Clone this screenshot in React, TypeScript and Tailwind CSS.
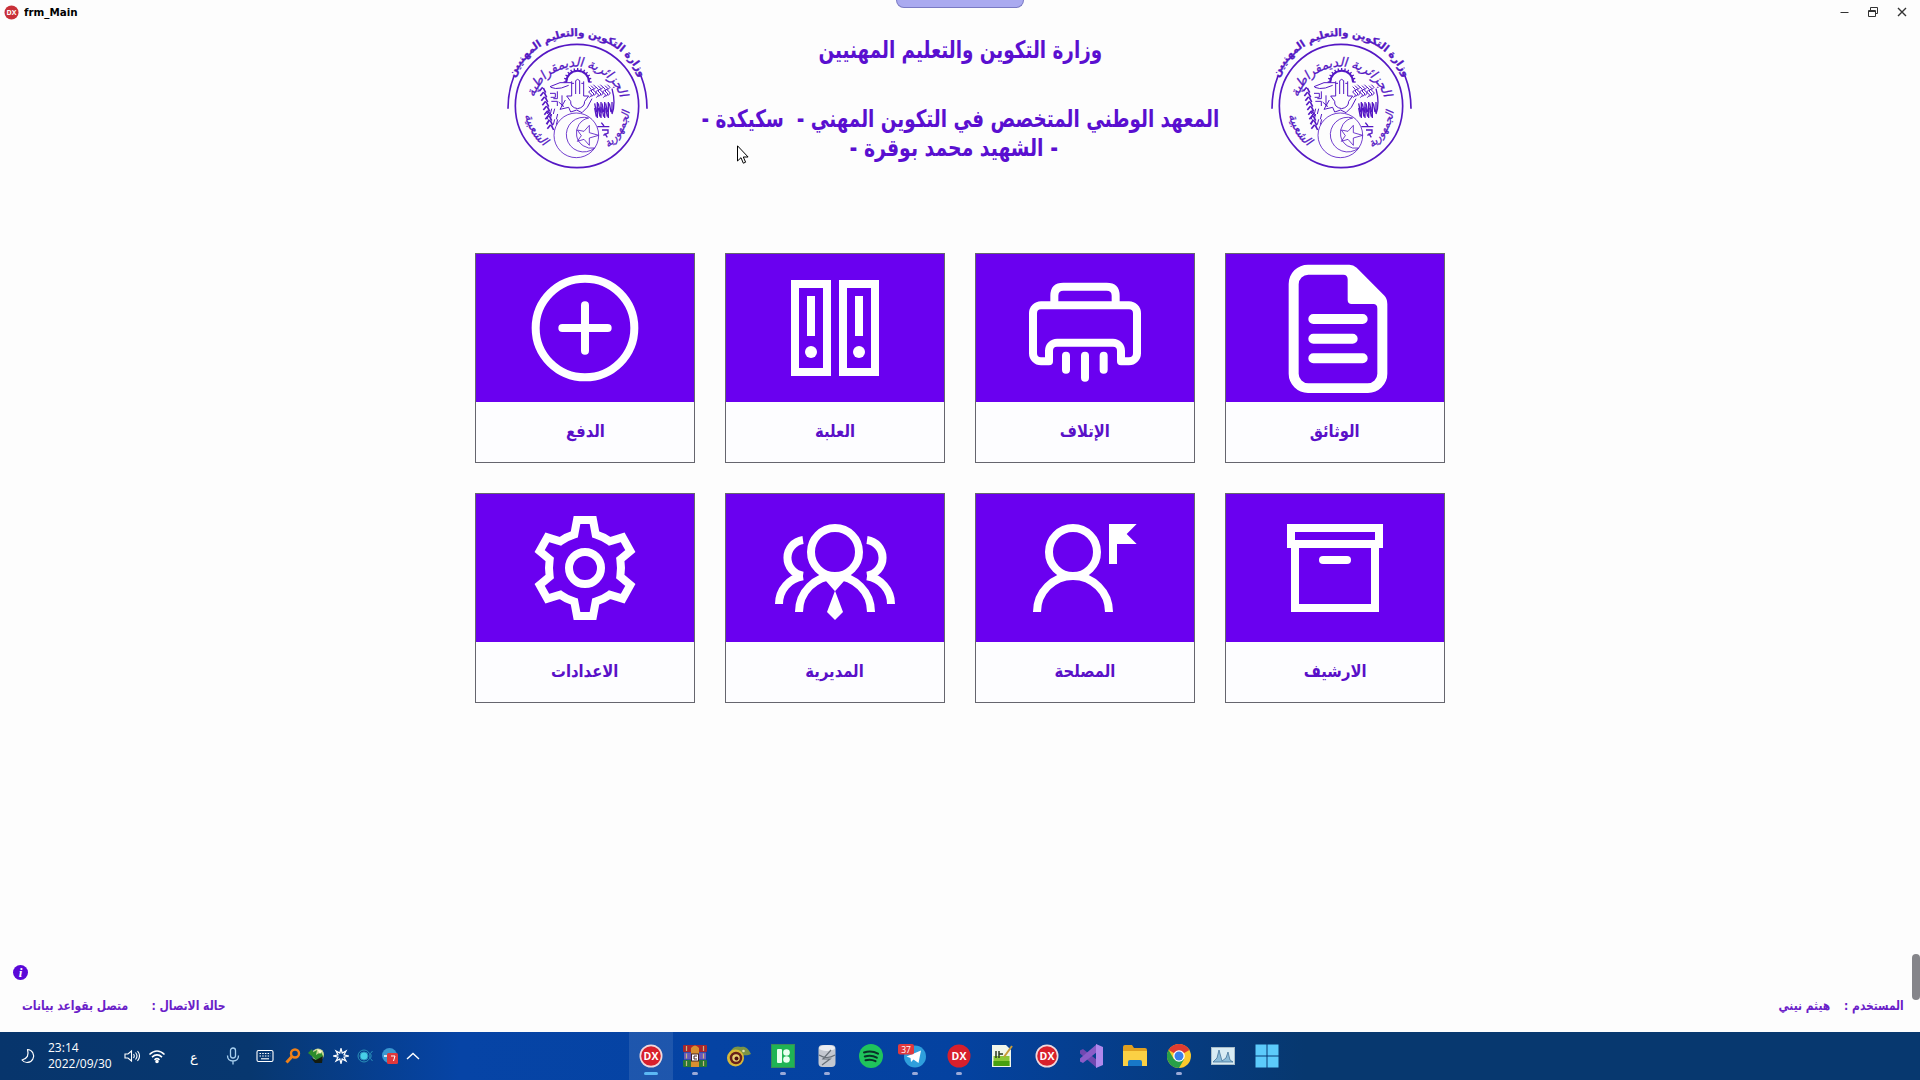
import React from "react";

const AR = "font-['DejaVu_Sans',sans-serif]";

function Seal() {
  const rays = Array.from({ length: 13 }, (_, i) => Math.PI + (i * Math.PI) / 12);
  const leaves = Array.from({ length: 9 }, (_, i) => i);
  return (
    <svg viewBox="0 0 480 480" className="size-40 shrink-0 overflow-visible" fill="none" stroke="#5518c4" strokeWidth="4">
      <defs>
        <path id="outerArc" d="M38 184 A205 205 0 0 1 424 184" />
        <path id="innerArc" d="M96 300 A137 137 0 1 1 366 300" />
        <path id="lowerLeft" d="M72 262 A162 162 0 0 0 150 392" />
        <path id="lowerRight" d="M314 390 A162 162 0 0 0 390 262" />
      </defs>
      <circle cx="231" cy="258" r="185" strokeWidth="5" />
      <path d="M24 266 Q24 214 42 168 M441 266 Q441 214 423 168" strokeWidth="5" />
      <g fill="#5518c4" stroke="none" className="font-['DejaVu_Sans',sans-serif]" direction="rtl">
        <text fontSize="31" fontWeight="700" textAnchor="middle" stroke="#5518c4" strokeWidth="1">
          <textPath href="#outerArc" startOffset="50%">وزارة التكوين والتعليم المهنيين</textPath>
        </text>
        <text fontSize="38" fontStyle="italic" textAnchor="middle" stroke="#5518c4" strokeWidth="0.8">
          <textPath href="#innerArc" startOffset="50%">الجزائرية الديمقراطية</textPath>
        </text>
        <text fontSize="36" fontStyle="italic" textAnchor="middle" stroke="#5518c4" strokeWidth="0.8">
          <textPath href="#lowerLeft" startOffset="50%">الشعبية</textPath>
        </text>
        <text fontSize="32" fontStyle="italic" textAnchor="middle" stroke="#5518c4" strokeWidth="0.8">
          <textPath href="#lowerRight" startOffset="50%">الجمهورية</textPath>
        </text>
      </g>
      <path d="M199 186 A34 34 0 0 1 267 186" strokeWidth="6" />
      {rays.map((a) => (
        <path
          key={a}
          d={`M${233 + 32 * Math.cos(a)} ${186 + 32 * Math.sin(a)} L${233 + 42 * Math.cos(a)} ${186 + 42 * Math.sin(a)}`}
          strokeWidth="4"
        />
      ))}
      <path d="M215 228 V184 M227 222 V182 Q233 174 239 182 V222 M251 184 V228 M215 190 H222 M244 190 H251 M215 228 H200 L212 244 Q210 262 233 266 Q254 262 254 244 L266 228 H251" strokeWidth="3" />
      <path d="M150 200 L180 188 H214 M152 202 Q166 208 184 204 L206 196 M196 240 L180 268 L206 262 L212 276 L230 270 L246 278 L262 262 L276 236" strokeWidth="3" />
      <path d="M150 220 h16 v12 h-14 M172 214 v22 h-12 M154 244 h18 v14 M186 226 v34 M176 246 l16 14" strokeWidth="3" />
      {leaves.map((i) => (
        <g key={i} strokeWidth="5">
          <path d={`M${128 + i * 3} ${202 + i * 14} l-10 12 M${130 + i * 3} ${204 + i * 14} l7 14`} />
          <path d={`M${146 + (i % 4) * 9} ${266 + Math.floor(i / 3) * 16} l-4 16`} strokeWidth="3" />
          <path d={`M${284 + (i % 5) * 11} ${250 + (i % 2) * 14} l5 26 m3 -30 v34`} strokeWidth="4" />
          <path d={`M${266 + i * 7} ${200 - (i % 3) * 3} l8 8 l-8 8 l9 9 l-7 8`} strokeWidth="3" />
        </g>
      ))}
      <path d="M336 206 Q348 250 336 282 M292 320 H328 M304 308 L312 318 M306 330 h18 v10 M310 346 l16 -8 M314 340 l8 12" strokeWidth="4" />
      <circle cx="229" cy="346" r="67" strokeWidth="2.5" />
      <path d="M284 384 A52 52 0 1 1 266 294 A45 45 0 1 0 284 384" strokeWidth="2.5" />
      <path d="M232 330 L252 334 L268 316 L268 338 L296 346 L268 354 L268 376 L252 358 L232 364 L244 347 Z" strokeWidth="2.5" />
    </svg>
  );
}

const tiles: { label: string; icon: React.ReactNode }[] = [
  {
    label: "الدفع",
    icon: (
      <g strokeLinecap="round">
        <circle cx="375" cy="264" r="148" />
        <path d="M307 264 H443 M375 196 V332" />
      </g>
    ),
  },
  {
    label: "العلبة",
    icon: (
      <>
        <rect x="255" y="132" width="96" height="264" />
        <rect x="399" y="132" width="96" height="264" />
        <path d="M303 168 V288 M447 168 V288" />
        <g fill="white" stroke="none">
          <circle cx="303" cy="336" r="18" />
          <circle cx="447" cy="336" r="18" />
        </g>
      </>
    ),
  },
  {
    label: "الإتلاف",
    icon: (
      <>
        <path d="M283 190 V167 Q283 140 310 140 H440 Q467 140 467 167 V190" />
        <path d="M267 364 H243 a24 24 0 0 1 -24 -24 V220 a24 24 0 0 1 24 -24 H507 a24 24 0 0 1 24 24 V340 a24 24 0 0 1 -24 24 H483 V332 a24 24 0 0 0 -24 -24 H291 a24 24 0 0 0 -24 24 Z" strokeLinejoin="round" />
        <path d="M318 347 V389 M375 347 V413 M431 347 V389" strokeLinecap="round" />
      </>
    ),
  },
  {
    label: "الوثائق",
    icon: (
      <>
        <path
          fill="white"
          stroke="none"
          fillRule="evenodd"
          d="M294 74 H418 Q430 74 440 83 L522 166 Q532 176 532 192 V401 a58 58 0 0 1 -58 58 H294 a58 58 0 0 1 -58 -58 V132 a58 58 0 0 1 58 -58 Z M295 104 H400 Q413 104 413 118 V180 Q413 192 425 192 H490 Q502 192 502 206 V401 a29 29 0 0 1 -29 29 H295 a29 29 0 0 1 -29 -29 V133 a29 29 0 0 1 29 -29 Z"
        />
        <path d="M310 237 H458 M310 296 H428 M310 355 H458" strokeWidth="30" strokeLinecap="round" />
      </>
    ),
  },
  {
    label: "الاعدادات",
    icon: (
      <>
        <path d="M351 120 L399 120 L407 163 Q430 170 449 184 L488 172 L511 213 L481 238 Q485 264 481 290 L511 315 L488 356 L449 344 Q430 358 407 365 L399 408 H351 L343 365 Q320 358 301 344 L262 356 L239 315 L269 290 Q265 264 269 238 L239 213 L262 172 L301 184 Q320 170 343 163 Z" />
        <circle cx="375" cy="264" r="48" />
      </>
    ),
  },
  {
    label: "المديرية",
    icon: (
      <>
        <circle cx="375" cy="216" r="72" />
        <path d="M267 396 A108 108 0 0 1 483 396" />
        <path d="M279 180 A54 54 0 0 0 279 287 M471 180 A54 54 0 0 1 471 287" />
        <path d="M279 289 A84 84 0 0 0 207 372 M471 289 A84 84 0 0 1 543 372" />
        <path d="M340 294 L375 334 L410 294 Z M375 332 L399 396 L375 420 L351 396 Z" fill="white" stroke="none" />
      </>
    ),
  },
  {
    label: "المصلحة",
    icon: (
      <>
        <circle cx="339" cy="216" r="72" />
        <path d="M231 396 A108 108 0 0 1 447 396" />
        <path d="M447 132 H530 L500 162 L530 192 H471 V252 H447 Z" fill="white" stroke="none" />
      </>
    ),
  },
  {
    label: "الارشيف",
    icon: (
      <>
        <rect x="243" y="144" width="264" height="48" />
        <path d="M255 192 V384 H495 V192" />
        <path d="M339 240 H411" strokeLinecap="round" />
      </>
    ),
  },
];

function Tile({ label, icon }: { label: string; icon: React.ReactNode }) {
  return (
    <div className="flex h-[210px] w-[220px] flex-col border border-[#66666e] bg-[#fdfdff]">
      <div className="h-[148px] bg-[#6a00f0]">
        <svg viewBox="48 42 654 444" className="h-[148px] w-[218px]" fill="none" stroke="white" strokeWidth="24">
          {icon}
        </svg>
      </div>
      <div className={`flex flex-1 items-center justify-center pb-0.5 text-[17px] leading-none font-bold text-[#5a10c8] ${AR}`}>
        <span className="scale-x-[0.87]">{label}</span>
      </div>
    </div>
  );
}

function DxIcon({ ring }: { ring?: boolean }) {
  return (
    <svg viewBox="0 0 24 24" className="size-6">
      <circle cx="12" cy="12" r="11.5" fill={ring ? "#f0d8dc" : "#d8202c"} />
      <circle cx="12" cy="12" r="9.8" fill="#d8202c" />
      <text x="12" y="15.8" textAnchor="middle" fontSize="10.5" fontWeight="700" fill="white" fontFamily="Open Sans, sans-serif">
        DX
      </text>
    </svg>
  );
}

const apps: { icon: React.ReactNode; run?: boolean; active?: boolean }[] = [
  { icon: <DxIcon ring />, active: true },
  {
    run: true,
    icon: (
      <svg viewBox="0 0 24 24" className="size-6">
        <rect y="1" width="24" height="7" rx="1" fill="#a8262c" />
        <rect x="1" y="8.500" width="22" height="7" fill="#6a5ab8" />
        <rect y="16" width="24" height="7" rx="1" fill="#2a7a34" />
        <path d="M3.500 2v20M20.500 2v20" stroke="#c8b880" strokeWidth="1.200" strokeDasharray="5 2.500" />
        <path d="M8 4q4-5 8 0v19H8Z" fill="#d89030" />
        <rect x="8.500" y="10" width="7" height="7" fill="#fff" stroke="#422" />
        <path d="M14 12h-3v3h3" stroke="#422" fill="none" />
      </svg>
    ),
  },
  {
    icon: (
      <svg viewBox="0 0 24 24" className="size-6">
        <path d="M2 12C3 4 9 1 14 3c4-1 7 1 10 7-3 2-8 1-10 1Z" fill="#7c9444" />
        <circle cx="8.500" cy="14" r="8.500" fill="#d8b838" />
        <circle cx="9" cy="14" r="5" fill="#e8d070" stroke="#68201a" strokeWidth="2.500" />
        <circle cx="9.500" cy="14.500" r="2" fill="#501010" />
        <circle cx="16.500" cy="7" r="1.300" fill="#e0e0b0" />
      </svg>
    ),
  },
  {
    run: true,
    icon: (
      <svg viewBox="0 0 24 24" className="size-6">
        <rect width="24" height="24" fill="#3a8a58" />
        <rect x="1" y="1" width="22" height="22" fill="#1fb454" />
        <rect x="6" y="5" width="5" height="14" rx="1" fill="#eafff0" />
        <circle cx="15.500" cy="8.500" r="3.300" fill="#eafff0" />
        <circle cx="15.500" cy="15.500" r="3.300" fill="#eafff0" />
      </svg>
    ),
  },
  {
    run: true,
    icon: (
      <svg viewBox="0 0 24 24" className="size-6">
        <rect x="3.500" y="1" width="17" height="22" rx="4" fill="#c4c8d0" />
        <ellipse cx="12" cy="4" rx="8" ry="3" fill="#eceef2" />
        <path d="M4 11q8 5 16 0M16 6 L8 15 h7 L7 21" stroke="#687078" fill="none" strokeWidth="1.200" />
      </svg>
    ),
  },
  {
    icon: (
      <svg viewBox="0 0 24 24" className="size-6">
        <circle cx="12" cy="12" r="12" fill="#1fc45c" />
        <path d="M5 8.500q7.500-2.500 14 1.200M5.800 12.500q6.500-2 12 1.200M6.500 16.200q5.500-1.500 10 1" stroke="#0a3028" strokeWidth="2" fill="none" strokeLinecap="round" />
      </svg>
    ),
  },
  {
    run: true,
    icon: (
      <svg viewBox="0 0 28 24" className="h-6 w-7 -translate-x-[3px]">
        <circle cx="17" cy="12.500" r="11" fill="#2f9fdc" />
        <path d="M8.500 12.500 L23 6.500 L20.500 19 L15.500 15.500 L13 18 L12.500 14 Z" fill="white" />
        <rect width="16" height="10.500" rx="2" fill="#e03a3e" />
        <text x="8" y="8.700" fontSize="8.500" fill="white" textAnchor="middle" fontFamily="Open Sans, sans-serif">37</text>
      </svg>
    ),
  },
  { icon: <DxIcon />, run: true },
  {
    icon: (
      <svg viewBox="0 0 24 24" className="size-6 -translate-x-px">
        <path d="M2 1h14l5 5v17H2Z" fill="#f2f6ea" />
        <path d="M3.500 12h16v10h-16Z" fill="#8cc838" />
        <path d="M3.500 17h16v5h-16Z" fill="#48a010" />
        <path d="M6 7v7M9 7v7M9 10h4" stroke="#2a3a20" strokeWidth="1.500" />
        <path d="M22 2 L14 13" stroke="#c89c38" strokeWidth="2" />
      </svg>
    ),
  },
  { icon: <DxIcon ring /> },
  {
    icon: (
      <svg viewBox="0 0 24 24" className="size-6">
        <path d="M1 6.500 L4 5 L18 16 V24 L1 9.500 Z" fill="#7048b0" />
        <path d="M1 17.500 L4 19 L18 8 V0 L1 14.500 Z" fill="#8a5cc8" />
        <path d="M17 0 L24 3 V21 L17 24 Z" fill="#b088ec" />
      </svg>
    ),
  },
  {
    icon: (
      <svg viewBox="0 0 24 24" className="size-6">
        <path d="M0 3q0-2 2-2h7l2 3h11q2 0 2 2v4H0Z" fill="#e0a020" />
        <path d="M0 7h24v15H0Z" fill="#fbd044" />
        <path d="M5 22v-4q0-2 2-2h10q2 0 2 2v4Z" fill="#1878c8" />
      </svg>
    ),
  },
  {
    run: true,
    icon: (
      <svg viewBox="0 0 24 24" className="size-6">
        <circle cx="12" cy="12" r="12" fill="#fbc92c" />
        <path d="M12 12 L1.600 6 A12 12 0 0 1 22.400 6 Z" fill="#e03c30" />
        <path d="M1.600 6 A12 12 0 0 0 12 24 L17.200 15 H6.800 Z" fill="#28a048" />
        <circle cx="12" cy="12" r="5.800" fill="white" />
        <circle cx="12" cy="12" r="4.500" fill="#3a80ea" />
      </svg>
    ),
  },
  {
    icon: (
      <svg viewBox="0 0 24 24" className="size-6">
        <rect y="3" width="24" height="18" fill="#a8bcc8" />
        <rect x="1" y="4" width="22" height="16" fill="#d8ecf4" />
        <path d="M2 18 L6 14 L8 6 L11 17 L15 14 L17 8 L19 16 L22 18Z" fill="#8cbcd8" stroke="#386890" strokeWidth=".7" />
      </svg>
    ),
  },
  {
    icon: (
      <svg viewBox="0 0 24 24" className="size-6" fill="#5ccbfb">
        <path d="M.5.500h11v11H.5zM12.500.500h11v11h-11zM.5 12.500h11v11H.5zM12.500 12.500h11v11h-11z" />
      </svg>
    ),
  },
];

function Slot({ w = "w-6", children }: { w?: string; children: React.ReactNode }) {
  return <div className={`flex h-full shrink-0 items-center justify-center ${w}`}>{children}</div>;
}

function Tray() {
  return (
    <div className="flex h-full w-[629px] items-center pl-4 text-white">
      <Slot>
        <svg viewBox="0 0 16 16" className="size-4" fill="none" stroke="white" strokeWidth="1.200">
          <path d="M7.500 1.500 A6.500 6.500 0 1 1 2 12 Q10 10 7.500 1.500Z" strokeLinejoin="round" />
        </svg>
      </Slot>
      <div className="ml-2 w-[72px] font-['Open_Sans',sans-serif] text-[12px] leading-4">
        <div>23:14</div>
        <div className="whitespace-nowrap">2022/09/30</div>
      </div>
      <Slot>
        <svg viewBox="0 0 16 16" className="size-4" fill="none" stroke="white" strokeWidth="1.100">
          <path d="M1 6h3l3.500-3v10L4 10H1ZM9.500 6q1.500 2 0 4M11.500 4.500q3 3.500 0 7M13.500 3q4 5 0 10" />
        </svg>
      </Slot>
      <Slot w="w-[26px]">
        <svg viewBox="0 0 18 16" className="h-4 w-[18px]" fill="none" stroke="white" strokeWidth="1.600">
          <path d="M1.500 6.500q7.500-7 15 0M4 9.200q5-4.500 10 0M6.500 11.800q2.500-2.200 5 0" />
          <circle cx="9" cy="13.500" r="1" fill="white" />
        </svg>
      </Slot>
      <Slot w="w-12">
        <span className={`pt-1 text-[13px] ${AR}`}>ع</span>
      </Slot>
      <Slot w="w-[30px]">
        <svg viewBox="0 0 14 18" className="h-[18px] w-3.5" fill="none" stroke="#a8d0f0" strokeWidth="1.300">
          <rect x="4.500" y="1" width="5" height="10" rx="2.500" />
          <path d="M1.500 8.500q0 5.500 5.500 5.500t5.500-5.500M7 14v3.500" />
        </svg>
      </Slot>
      <Slot w="w-[34px]">
        <svg viewBox="0 0 18 14" className="h-3.5 w-[18px]" fill="none" stroke="white" strokeWidth="1.100">
          <rect x="1" y="1.500" width="16" height="11" rx="1.500" />
          <path d="M3.500 4.500h11M3.500 7h11" strokeDasharray="1.500 1.200" />
          <path d="M5 9.800h8" />
        </svg>
      </Slot>
      <Slot w="w-[22px]">
        <svg viewBox="0 0 16 16" className="size-4" fill="none" stroke="#f08018">
          <circle cx="10" cy="5.500" r="4" strokeWidth="2.400" />
          <path d="M7 8.500 L1.500 14.500" strokeWidth="3" />
        </svg>
      </Slot>
      <Slot>
        <svg viewBox="0 0 16 16" className="size-4">
          <circle cx="10" cy="6.500" r="6" fill="#c8d890" />
          <path d="M0 5l4-4 1 3q3-1 4-2l-1 5 5-3 2 4-6 5-3-3z" fill="#2c8c2c" />
          <path d="M3 10l5 2 7-4-1 7H7z" fill="#141c10" />
          <path d="M9 1l5 2-2 3z" fill="#fff8d0" />
        </svg>
      </Slot>
      <Slot w="w-[25px]">
        <svg viewBox="0 0 16 16" className="size-4" stroke="white" fill="none">
          <path d="M8 .5 9.200 5 13 3 11 6.800 15.500 8 11 9.200 13 13 9.200 11 8 15.500 6.800 11 3 13 5 9.200.5 8 5 6.800 3 3 6.800 5Z" strokeWidth="1.200" />
        </svg>
      </Slot>
      <Slot>
        <svg viewBox="0 0 16 16" className="size-4" fill="none" stroke="#2a90b8">
          <circle cx="7" cy="8" r="6" />
          <circle cx="7" cy="8" r="4" fill="#48d0e8" />
          <path d="M15.500 3l-2 2.500q1.500 2 0 5l2 2.500" />
        </svg>
      </Slot>
      <Slot w="w-[25px]">
        <svg viewBox="0 0 16 16" className="size-4">
          <circle cx="7.500" cy="7.500" r="7.500" fill="#3a98d0" />
          <path d="M2 8h4" stroke="white" strokeWidth="1.500" />
          <rect x="5" y="5" width="11" height="11" rx="1.500" fill="#e0383c" />
          <path d="M9 8h4l-1.500 5" stroke="white" fill="none" />
        </svg>
      </Slot>
      <Slot w="w-[22px]">
        <svg viewBox="0 0 14 8" className="h-2 w-3.5" fill="none" stroke="white" strokeWidth="1.400">
          <path d="M1 7l6-5.500L13 7" />
        </svg>
      </Slot>
    </div>
  );
}

export default function App() {
  return (
    <div className="relative flex h-[1080px] w-[1920px] flex-col overflow-hidden bg-[#fdfdfd]">
      <header className="flex h-6 shrink-0 items-center justify-between pl-1 pr-3">
        <div className="flex items-center gap-[5px]">
          <svg viewBox="0 0 16 16" className="size-[15px]">
            <circle cx="8" cy="8" r="7.500" fill="#c83038" />
            <text x="8" y="10.700" textAnchor="middle" fontSize="7.500" fontWeight="700" fill="white" fontFamily="Open Sans, sans-serif">
              DX
            </text>
          </svg>
          <span className="w-14 origin-left scale-x-[0.94] font-['DejaVu_Sans',sans-serif] text-[11px] leading-none font-bold text-black">frm_Main</span>
        </div>
        <div className="flex items-center gap-[17px]">
          <svg viewBox="0 0 12 12" className="size-3" stroke="#333" fill="none">
            <path d="M2.500 6.500h8" />
          </svg>
          <svg viewBox="0 0 12 12" className="size-3" stroke="#333" fill="none">
            <path d="M1.500 4.500h7v6h-7zM3.500 4V1.500h7v6H9M1.500 5.500h7" />
          </svg>
          <svg viewBox="0 0 12 12" className="size-3" stroke="#333" strokeWidth="1.400" fill="none">
            <path d="M2 2l8 8M10 2l-8 8" />
          </svg>
        </div>
      </header>
      <div className="absolute left-[896px] top-0 h-2 w-32 rounded-b-lg border border-t-0 border-[#7a7ac4] bg-[#aaaaf0]" />

      <section className="-mt-1 flex h-40 shrink-0 items-start justify-center pl-1" dir="rtl">
        <div className="flex w-[924px] items-start justify-between">
          <Seal />
          <div className={`flex w-[520px] flex-col items-center pt-[15px] text-[24px] leading-[30px] font-bold whitespace-nowrap text-[#5a0fd0] ${AR}`}>
            <div className="mr-1 scale-x-[0.765]">وزارة التكوين والتعليم المهنيين</div>
            <div className="mt-[39px] mr-1 scale-x-[0.765]">المعهد الوطني المتخصص في التكوين المهني -&nbsp; سكيكدة -</div>
            <div className="-mt-px mr-4 scale-x-[0.785]">- الشهيد محمد بوقرة -</div>
          </div>
          <Seal />
        </div>
      </section>

      <main className="mt-[73px] grid shrink-0 grid-cols-4 gap-[30px] self-center">
        {tiles.map((t) => (
          <Tile key={t.label} {...t} />
        ))}
      </main>

      <footer className="mt-auto shrink-0">
        <div className="flex h-[34px] items-center pl-[13px]">
          <div className="flex size-[15px] items-center justify-center rounded-full bg-[#5a08d8] font-['Liberation_Serif',serif] text-[13px] leading-none font-bold text-white italic">
            i
          </div>
        </div>
        <div className={`flex h-[43px] items-start justify-between pt-[7px] pr-4 pl-[22px] text-[13px] leading-5 font-bold whitespace-nowrap text-[#6a20c8] ${AR}`} dir="ltr">
          <div className="flex origin-left scale-x-[0.83] gap-[28px]">
            <span dir="rtl">متصل بقواعد بيانات</span>
            <span dir="rtl">حالة الاتصال :</span>
          </div>
          <div className="flex origin-right scale-x-[0.82] gap-[17px]">
            <span dir="rtl">هيثم نيني</span>
            <span dir="rtl">المستخدم :</span>
          </div>
        </div>
        <div className="flex h-12 bg-[linear-gradient(90deg,#07356c_0%,#07376f_13%,#0644a6_24%,#0442a0_50%,#07386f_68%,#07386f_100%)]">
          <Tray />
          <div className="flex h-full">
            {apps.map((a, i) => (
              <div key={i} className={a.active ? "flex w-11 flex-col items-center bg-white/10 pt-3" : "flex w-11 flex-col items-center pt-3"}>
                {a.icon}
                {a.active && <div className="mt-1 h-[3px] w-3.5 rounded-full bg-[#5cb8f4]" />}
                {a.run && <div className="mt-1 h-[3px] w-1.5 rounded-full bg-[#9aaad8]" />}
              </div>
            ))}
          </div>
        </div>
      </footer>

      <div className="absolute top-[954px] right-0 h-[46px] w-2 rounded-full bg-[#85858a]" />
      <svg viewBox="0 0 12 19" className="absolute top-[145px] left-[737px] h-[19px] w-3">
        <path d="M.5.800V16l3.500-3.300 2.300 5.500 2.300-1L6.300 12h4.800Z" fill="white" stroke="black" />
      </svg>
    </div>
  );
}
